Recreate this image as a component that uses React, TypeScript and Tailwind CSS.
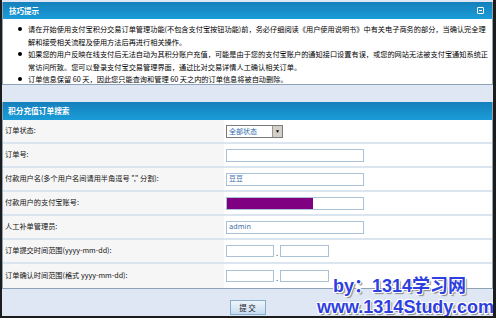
import React from 'react';

const cjk = "font-['SimSun','Noto_Sans_CJK_SC',sans-serif]";

const tips = [
  [
    '请在开始使用支付宝积分交易订单管理功能(不包含支付宝按钮功能)前，务必仔细阅读《用户使用说明书》中有关电子商务的部分，当确认完全理',
    '解和接受相关流程及使用方法后再进行相关操作。',
  ],
  [
    '如果您的用户反映在线支付后无法自动为其积分账户充值，可能是由于您的支付宝账户的通知接口设置有误，或您的网站无法被支付宝通知系统正',
    '常访问所致。您可以登录支付宝交易管理界面，通过比对交易详情人工确认相关订单。',
  ],
  ['订单信息保留 60 天，因此您只能查询和管理 60 天之内的订单信息将被自动删除。'],
];

const Input = ({ value, children }: { value?: string; children?: React.ReactNode }) => (
  <div className="relative w-[138px] h-[13px] border border-[#a9c2d8] bg-white flex items-center">
    {children}
    {value && (
      <span className="pl-[2px] text-[7px] leading-none text-[#3a6da8] font-['DejaVu_Sans','Noto_Sans_CJK_SC',sans-serif]">
        {value}
      </span>
    )}
  </div>
);

const DateRange = () => (
  <div className="flex items-end">
    <div className="w-[48px] h-[12px] border border-[#a9c2d8] bg-white" />
    <span className="w-[6px] text-center text-[8px] leading-none text-[#333]">.</span>
    <div className="w-[49px] h-[12px] border border-[#a9c2d8] bg-white" />
  </div>
);

const rows: { label: string; field: React.ReactNode }[] = [
  {
    label: '订单状态:',
    field: (
      <div className="w-[57px] h-[13px] border border-[#7b7b7b] bg-white flex items-center justify-between">
        <span className={`pl-[2px] text-[7px] leading-none text-[#2e6aa8] ${cjk}`}>全部状态</span>
        <span className="w-[10px] h-[11px] bg-[#d4d0c8] border-l border-[#999] flex items-center justify-center text-[5px] leading-none text-black">
          ▼
        </span>
      </div>
    ),
  },
  { label: '订单号:', field: <Input /> },
  { label: '付款用户名(多个用户名间请用半角逗号 "," 分割):', field: <Input value="豆豆" /> },
  {
    label: '付款用户的支付宝账号:',
    field: (
      <Input>
        <div className="absolute left-0 top-0 bottom-0 w-[86px] bg-[#7f0080]" />
      </Input>
    ),
  },
  { label: '人工补单管理员:', field: <Input value="admin" /> },
  { label: '订单提交时间范围(yyyy-mm-dd):', field: <DateRange /> },
  { label: '订单确认时间范围(格式 yyyy-mm-dd):', field: <DateRange /> },
];

const PanelHeader = ({ title, collapse }: { title: string; collapse?: boolean }) => (
  <div className="h-[17px] bg-gradient-to-b from-[#1680bb] to-[#1a9cd8] flex items-center justify-between pl-[6px] pr-[8px]">
    <span className={`text-[7.5px] leading-none font-bold text-white ${cjk}`}>{title}</span>
    {collapse && (
      <span className="w-[7px] h-[7px] border border-white rounded-[1px] flex items-center justify-center">
        <span className="w-[3px] h-px bg-white" />
      </span>
    )}
  </div>
);

const App = () => {
  return (
    <div className="relative w-[496px] h-[318px] overflow-hidden bg-[#dfe7f4] border-l-2 border-r-[3px] border-b-2 border-[#1c1c1c] pt-[2px] flex flex-col">
      {/* 技巧提示 */}
      <div className="border-x border-[#8fa3b7]">
        <PanelHeader title="技巧提示" collapse />
        <div className="h-[66px] bg-white border-b border-[#8fa3b7] pl-[15px] pt-[4px]">
          {tips.map((lines, i) => (
            <div key={i} className="flex">
              <div className="h-[12.5px] flex items-center">
                <span className="w-[4px] h-[4px] rounded-full bg-black mr-[6px]" />
              </div>
              <div className={`text-[7.2px] leading-[12.5px] text-black ${cjk}`}>
                {lines.map((l, j) => (
                  <div key={j} className="whitespace-nowrap">{l}</div>
                ))}
              </div>
            </div>
          ))}
        </div>
      </div>

      {/* 积分充值订单搜索 */}
      <div className="mt-[17px] border-x border-[#8fa3b7]">
        <div className="h-[18px] bg-gradient-to-b from-[#1680bb] to-[#1a9cd8] flex items-center pl-[5px]">
          <span className={`text-[7.7px] leading-none font-bold text-white ${cjk}`}>积分充值订单搜索</span>
        </div>
        <div className="border-b border-[#8fa3b7]">
          {rows.map((r, i) => (
            <div
              key={i}
              className={`grid grid-cols-[221px_1fr] h-[24px] ${i < rows.length - 1 ? 'border-b-2 border-[#dbe5f0]' : ''}`}
            >
              <div className={`bg-[#f6f6f6] flex items-center pl-[2px] text-[7.2px] leading-none text-[#111] whitespace-nowrap ${cjk}`}>
                {r.label}
              </div>
              <div className="bg-white flex items-center pl-[2px]">{r.field}</div>
            </div>
          ))}
        </div>
      </div>

      <div className="flex-1 flex items-end justify-center pb-[1px]">
        <button className="w-[36px] h-[15px] border border-[#8aaccc] bg-gradient-to-b from-[#eef5fc] to-[#c6dcf0] flex items-center justify-center">
          <span className={`text-[7.5px] leading-none text-[#222] ${cjk}`}>提 交</span>
        </button>
      </div>

      {/* watermark */}
      <div className="absolute left-[331px] top-[277px] text-[18px] leading-none font-bold text-[#2e3fe0] font-['Liberation_Sans','Noto_Sans_CJK_SC',sans-serif] whitespace-nowrap [text-shadow:1px_1px_0_#fff,-1px_-1px_0_#fff,1px_-1px_0_#fff,-1px_1px_0_#fff,2px_2px_1px_#888]">
        by：1314学习网
      </div>
      <div className="absolute left-[315px] top-[298px] text-[18px] leading-none font-bold text-[#2e3fe0] font-['Liberation_Sans',sans-serif] whitespace-nowrap [text-shadow:1px_1px_0_#fff,-1px_-1px_0_#fff,1px_-1px_0_#fff,-1px_1px_0_#fff,2px_2px_1px_#888]">
        www.1314Study.com
      </div>
    </div>
  );
};

export default App;
